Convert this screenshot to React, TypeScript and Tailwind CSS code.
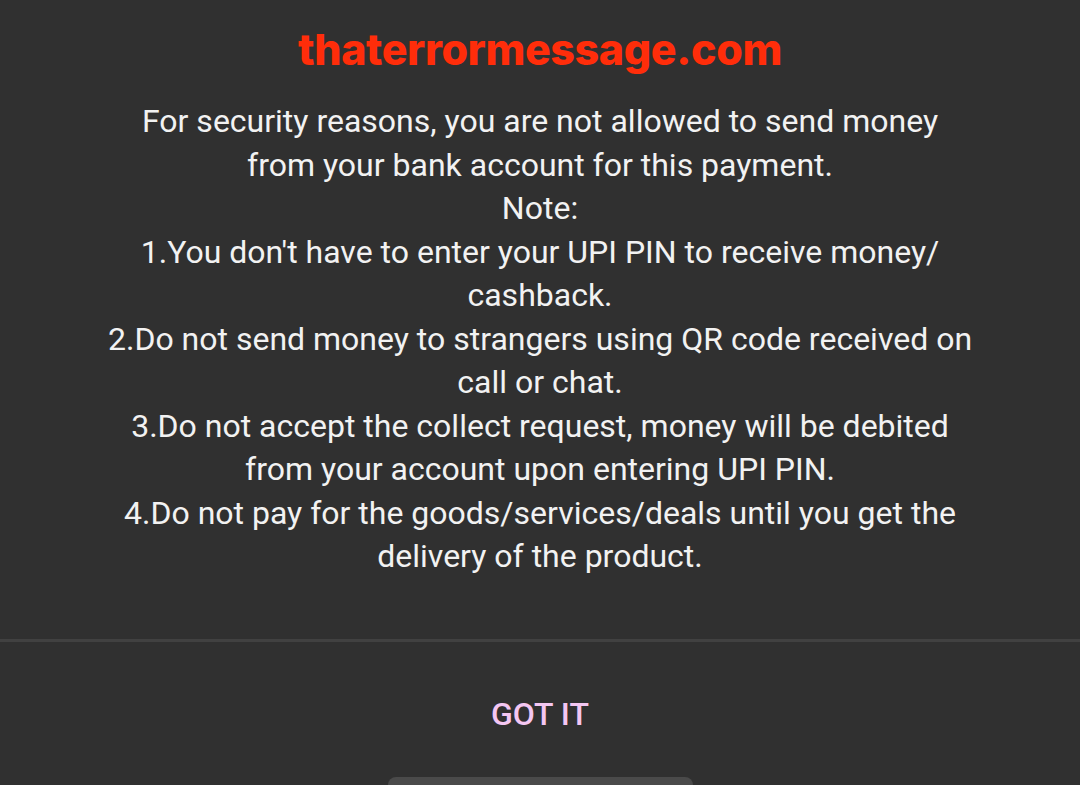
const lines = [
  'For security reasons, you are not allowed to send money',
  'from your bank account for this payment.',
  'Note:',
  "1.You don't have to enter your UPI PIN to receive money/",
  'cashback.',
  '2.Do not send money to strangers using QR code received on',
  'call or chat.',
  '3.Do not accept the collect request, money will be debited',
  'from your account upon entering UPI PIN.',
  '4.Do not pay for the goods/services/deals until you get the',
  'delivery of the product.',
];

export default function App() {
  return (
    <div className="flex h-[785px] w-[1080px] flex-col overflow-hidden bg-[#303030] font-['Roboto',sans-serif]">
      <div className="flex h-[100px] items-center justify-center pb-[2px]">
        <span className="font-['Inter',sans-serif] text-[43px] font-extrabold tracking-[-0.4px] text-[#ff2d0a]">
          thaterrormessage.com
        </span>
      </div>
      <div className="flex flex-col items-center text-[32px] leading-[43.5px] text-[#f2f2f2]">
        {lines.map((line) => (
          <div key={line}>{line}</div>
        ))}
      </div>
      <div className="mt-auto h-[3px] bg-[#414141]" />
      <div className="flex h-[135px] items-center justify-center pt-[8px]">
        <span className="text-[32px] font-medium text-[#f4c6f2]">GOT IT</span>
      </div>
      <div className="flex justify-center">
        <div className="h-[8px] w-[305px] rounded-t-full bg-[#4a4a4a]" />
      </div>
    </div>
  );
}
